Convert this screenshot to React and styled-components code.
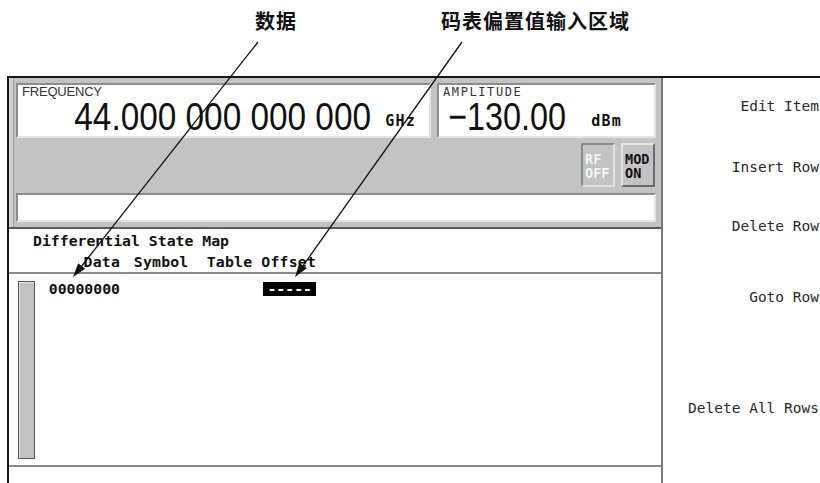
import React from 'react';
import styled, { createGlobalStyle } from 'styled-components';

const GlobalStyle = createGlobalStyle`
  html, body { margin: 0; padding: 0; background: #fff; }
  body {
    width: 820px;
    height: 483px;
    overflow: hidden;
    font-family: "DejaVu Sans Mono", "Liberation Mono", monospace;
  }
`;

const MONO = `"DejaVu Sans Mono", "Liberation Mono", monospace`;

const Page = styled.div`
  position: relative;
  width: 820px;
  height: 483px;
  overflow: hidden;
  background: #fff;
`;

const CalloutBar = styled.div`
  height: 76px;
  box-sizing: border-box;
  padding-top: 11px;
  display: flex;
  align-items: flex-start;
`;

const CalloutLabel = styled.div`
  margin-left: ${(p) => p.$indent}px;
  font-family: "Noto Sans CJK SC", "Noto Sans", sans-serif;
  font-size: 20px;
  line-height: 20px;
  font-weight: 700;
  letter-spacing: 1px;
  color: #111;
  white-space: nowrap;
`;

const Frame = styled.div`
  margin-left: 7px;
  height: 407px;
  border-top: 2px solid #151515;
  border-left: 2px solid #151515;
  display: grid;
  grid-template-columns: 654px 1fr;
`;

const MainColumn = styled.div`
  display: flex;
  flex-direction: column;
  border-right: 2px solid #7b7b7b;
  min-width: 0;
`;

const StatusPanel = styled.div`
  background: #c3c3c3;
  padding: 5px 5px 5px 7px;
  border-bottom: 2px solid #5c5c5c;
  box-shadow: inset 4px 0 0 #d2d2d2, inset 5px 0 0 #9a9a9a;
  display: flex;
  flex-direction: column;
`;

const ReadoutRow = styled.div`
  display: flex;
  gap: 6px;
  height: 55px;
`;

const ReadoutBox = styled.div`
  width: ${(p) => p.$w}px;
  box-sizing: border-box;
  background: #fff;
  border: 2px solid;
  border-color: #8c8c8c #e4e4e4 #e4e4e4 #8c8c8c;
  display: flex;
  flex-direction: column;
  padding: 1px 0 0 4px;
`;

const ReadoutLabel = styled.div`
  height: 12px;
  line-height: 12px;
  color: #333;
  white-space: nowrap;
  font-family: ${(p) => (p.$mono ? MONO : `"Liberation Sans", Arial, sans-serif`)};
  font-size: ${(p) => (p.$mono ? 12 : 13)}px;
  letter-spacing: ${(p) => (p.$mono ? 1.6 : -0.2)}px;
`;

const ValueLine = styled.div`
  flex: 1;
  min-height: 0;
  display: flex;
  justify-content: flex-end;
  align-items: flex-end;
  gap: ${(p) => p.$gap}px;
  padding-right: ${(p) => p.$pr}px;
`;

const BigNumber = styled.span`
  display: inline-block;
  font-family: "Liberation Sans", Arial, sans-serif;
  font-size: 39px;
  line-height: 38px;
  color: #111;
  white-space: pre;
  transform: scaleX(${(p) => p.$scale});
  transform-origin: right bottom;
`;

const Unit = styled.span`
  font-family: ${MONO};
  font-weight: 700;
  font-size: 15px;
  line-height: 16px;
  letter-spacing: 1.2px;
  color: #111;
  margin-bottom: 7px;
`;

const AnnunciatorRow = styled.div`
  display: flex;
  justify-content: flex-end;
  gap: 6px;
  margin-top: 5px;
  padding-right: 1px;
  height: 44px;
`;

const Annunciator = styled.div`
  width: 34px;
  height: 44px;
  box-sizing: border-box;
  border: 2px solid;
  border-color: ${(p) =>
    p.$on ? '#e4e4e4 #6a6a6a #6a6a6a #e4e4e4' : '#8a8a8a #e2e2e2 #e2e2e2 #8a8a8a'};
  background: #c3c3c3;
  color: ${(p) => (p.$on ? '#111' : '#f4f4f4')};
  font-family: ${MONO};
  font-weight: 700;
  font-size: 13.5px;
  line-height: 14px;
  white-space: pre-line;
  display: flex;
  align-items: center;
  padding-left: 2px;
  padding-top: 1px;
`;

const InputBar = styled.div`
  margin-top: 6px;
  height: 29px;
  box-sizing: border-box;
  background: #fff;
  border: 2px solid;
  border-color: #8c8c8c #e4e4e4 #e4e4e4 #8c8c8c;
`;

const TableHeader = styled.div`
  height: 42px;
  padding-top: 1px;
  border-bottom: 2px solid #8a8a8a;
  font-family: ${MONO};
  font-weight: 700;
  font-size: 14.8px;
  color: #111;
`;

const Title = styled.div`
  padding-left: 24px;
  line-height: 21px;
  white-space: pre;
`;

const Columns = styled.div`
  display: grid;
  grid-template-columns: 75px 184px;
  column-gap: 12px;
  align-items: center;
  text-align: right;
  white-space: pre;
`;

const HeaderColumns = styled(Columns)`
  padding-left: 36px;
  line-height: 21px;
  letter-spacing: 0.2px;
`;

const ListArea = styled.div`
  display: flex;
  height: 191px;
  border-bottom: 2px solid #8a8a8a;
`;

const Scrollbar = styled.div`
  margin: 7px 0 0 9px;
  width: 17px;
  height: 178px;
  box-sizing: border-box;
  background: #c2c2c2;
  border: 1px solid #555;
  box-shadow: inset 1px 1px 0 #e2e2e2;
  flex-shrink: 0;
`;

const Rows = styled.div`
  margin-left: 10px;
  padding-top: 7px;
  font-family: ${MONO};
  font-weight: 700;
  font-size: 14.8px;
  color: #111;
`;

const DataRow = styled(Columns)`
  height: 16px;
  line-height: 16px;
`;

const OffsetField = styled.span`
  justify-self: end;
  background: #000;
  color: #fff;
  padding: 0 4px;
  line-height: 14px;
`;

const SoftkeyColumn = styled.div`
  display: flex;
  flex-direction: column;
  align-items: flex-end;
  padding-top: 20px;
  padding-right: 1px;
  min-width: 0;
`;

const Softkey = styled.div`
  margin-top: ${(p) => p.$gap}px;
  font-family: ${MONO};
  font-size: 14.5px;
  line-height: 16px;
  color: #2a2a2a;
  white-space: pre;
`;

const Overlay = styled.svg`
  position: absolute;
  left: 0;
  top: 0;
  pointer-events: none;
`;

const softkeys = [
  { label: 'Edit Item', gap: 0 },
  { label: 'Insert Row', gap: 45 },
  { label: 'Delete Row', gap: 43 },
  { label: 'Goto Row', gap: 55 },
  { label: 'Delete All Rows', gap: 95 },
];

export default function App() {
  return (
    <Page>
      <GlobalStyle />
      <CalloutBar>
        <CalloutLabel $indent={255}>数据</CalloutLabel>
        <CalloutLabel $indent={144}>码表偏置值输入区域</CalloutLabel>
      </CalloutBar>

      <Frame>
        <MainColumn>
          <StatusPanel>
            <ReadoutRow>
              <ReadoutBox $w={417}>
                <ReadoutLabel>FREQUENCY</ReadoutLabel>
                <ValueLine $gap={14} $pr={13}>
                  <BigNumber $scale={0.855}>44.000 000 000 000</BigNumber>
                  <Unit>GHz</Unit>
                </ValueLine>
              </ReadoutBox>
              <ReadoutBox $w={219}>
                <ReadoutLabel $mono>AMPLITUDE</ReadoutLabel>
                <ValueLine $gap={25} $pr={32}>
                  <BigNumber $scale={0.83}>−130.00</BigNumber>
                  <Unit>dBm</Unit>
                </ValueLine>
              </ReadoutBox>
            </ReadoutRow>
            <AnnunciatorRow>
              <Annunciator>{'RF\nOFF'}</Annunciator>
              <Annunciator $on>{'MOD\nON'}</Annunciator>
            </AnnunciatorRow>
            <InputBar />
          </StatusPanel>

          <TableHeader>
            <Title>Differential State Map</Title>
            <HeaderColumns>
              <span>Data</span>
              <span>Symbol  Table Offset</span>
            </HeaderColumns>
          </TableHeader>

          <ListArea>
            <Scrollbar />
            <Rows>
              <DataRow>
                <span>00000000</span>
                <OffsetField>-----</OffsetField>
              </DataRow>
            </Rows>
          </ListArea>
        </MainColumn>

        <SoftkeyColumn>
          {softkeys.map((k) => (
            <Softkey key={k.label} $gap={k.gap}>
              {k.label}
            </Softkey>
          ))}
        </SoftkeyColumn>
      </Frame>

      <Overlay width="820" height="483" viewBox="0 0 820 483">
        <line x1="258" y1="42" x2="81.7" y2="266" stroke="#111" strokeWidth="1.3" />
        <polygon points="73,277 85.2,268.8 78.2,263.2" fill="#111" />
        <line x1="462" y1="42" x2="303.1" y2="265.6" stroke="#111" strokeWidth="1.3" />
        <polygon points="295,277 306.8,268.2 299.4,263" fill="#111" />
      </Overlay>
    </Page>
  );
}
